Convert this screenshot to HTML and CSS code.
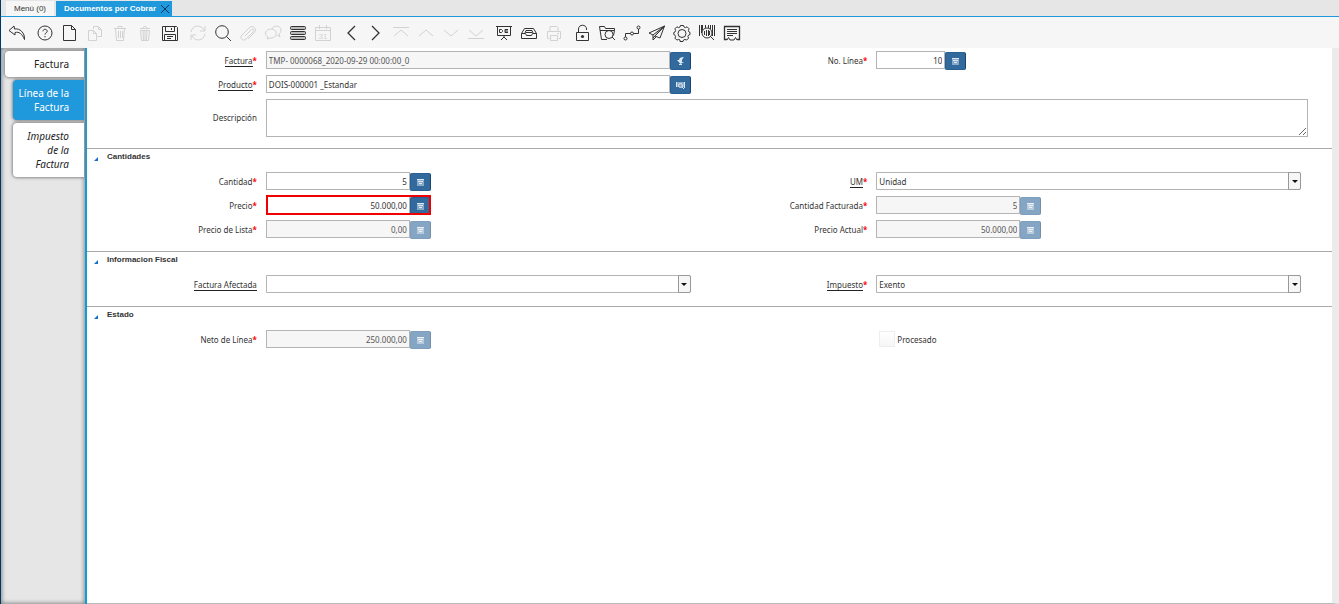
FILE: index.html
```
<!DOCTYPE html>
<html lang="es">
  <head>
    <meta charset="UTF-8" />
    <meta name="viewport" content="width=device-width, initial-scale=1.0" />
    <title>Documentos por Cobrar</title>
    <link rel="stylesheet" href="styles.css">
  </head>
  <body>
    <nav class="window-tabs">
      <button class="window-tab">Menú (0)</button>
      <div class="window-tab active">
        <button class="tab-title">Documentos por Cobrar</button>
        <button class="tab-close" aria-label="Cerrar">
          <svg viewBox="0 0 10 10"><path d="M1 1l8 8M9 1L1 9" /></svg>
        </button>
      </div>
    </nav>

    <div class="toolbar">
      <div class="tool-group">
        <button aria-label="Deshacer"><svg viewBox="0 0 18 18"><path d="M6 2L1 6.500l6 4.500V8.500c4-1 7 1 9.500 7C17 9 12 4 6.500 5z" /></svg></button>
      </div>
      <div class="tool-group">
        <button aria-label="Ayuda"><svg viewBox="0 0 18 18"><circle cx="9" cy="9" r="7" /><path d="M7 7.300c0-2.800 4.200-2.600 4.200 0 0 1.500-2.200 1.500-2.200 3.300M9 12v1.300" /></svg></button>
        <button aria-label="Nuevo"><svg viewBox="0 0 18 18"><path d="M2.500 1.500h8l4 4v11h-12zM10.500 1.500v4h4" /></svg></button>
        <button aria-label="Copiar" disabled><svg viewBox="0 0 18 18"><path d="M7.500 5V2.500h5l3 3v7h-4M12.500 2.500v3h3M2.500 6.500h5l3 3v7h-8zM7.500 6.500v3h3" /></svg></button>
        <button aria-label="Borrar" disabled><svg viewBox="0 0 18 18"><path d="M3 4.500h12M7 4V2.500h4V4M4.500 4.500l1 12h7l1-12M7.500 7v7M9.500 7v7M11.500 7v7" /></svg></button>
        <button aria-label="Borrar selección" disabled><svg viewBox="0 0 18 18"><path d="M4 4.500h10M7 4l1-1.500h2L11 4M4.500 6.500h9l-1 10h-7zM7 7l.5 9M9 7v9M11 7l-.5 9" /></svg></button>
        <button aria-label="Guardar"><svg viewBox="0 0 18 18"><path d="M1.500 2.500h14l1 1v13h-15zM4.500 2.500v5h9v-5M10.500 4v2M3.500 16.500v-6h11v6M6 12.500h6M6 14.500h4" /></svg></button>
      </div>
      <div class="tool-group">
        <button aria-label="Refrescar" disabled><svg viewBox="0 0 18 18"><path d="M2 8c1-7 10-8 13-2M16 2v5h-5M16 10c-1 7-10 8-13 2M2 16v-5h5" /></svg></button>
        <button aria-label="Buscar"><svg viewBox="0 0 18 18"><circle cx="8" cy="8" r="6.300" /><path d="M12.500 12.500L17 17" /></svg></button>
        <button aria-label="Adjunto" disabled><svg viewBox="0 0 18 18"><path d="M6 12l6-6c2-2 4 0 2 2l-7 7c-3 3-7-1-4-4l7-7c4-4 9 1 5 5l-6 6" /></svg></button>
        <button aria-label="Chat" disabled><svg viewBox="0 0 18 18"><path d="M3 15l1-2c-5-3-2-8 3-8 7 0 7 9 0 9H6zM8 5c1-4 9-4 9 1 0 2-1 3-2 4l1 3-3-2" /></svg></button>
        <button aria-label="Vista de tabla"><svg viewBox="0 0 18 18"><g class="bars"><rect x="1.500" y="2.500" width="15" height="3" rx="1" /><rect x="1.500" y="7.500" width="15" height="3" rx="1" /><rect x="1.500" y="12.500" width="15" height="3" rx="1" /></g></svg></button>
        <button aria-label="Historial" disabled><svg viewBox="0 0 18 18"><path d="M1.500 3.500h15v13h-15zM1.500 6.500h15M5.500 1v4M12.500 1v4" /><text x="9" y="14.500">31</text></svg></button>
      </div>
      <div class="tool-group">
        <button aria-label="Registro padre"><svg viewBox="0 0 18 18"><path class="medium" d="M13 2L6 9l7 7" /></svg></button>
        <button aria-label="Registro detalle"><svg viewBox="0 0 18 18"><path class="medium" d="M5 2l7 7-7 7" /></svg></button>
        <button aria-label="Primero" disabled><svg viewBox="0 0 18 18"><path d="M1 3.500h16M2 12l7-6 7 6" /></svg></button>
        <button aria-label="Anterior" disabled><svg viewBox="0 0 18 18"><path d="M2 12l7-6 7 6" /></svg></button>
        <button aria-label="Siguiente" disabled><svg viewBox="0 0 18 18"><path d="M2 6l7 6 7-6" /></svg></button>
        <button aria-label="Último" disabled><svg viewBox="0 0 18 18"><path d="M2 6l7 6 7-6M1 14.500h16" /></svg></button>
      </div>
      <div class="tool-group">
        <button aria-label="Informe"><svg viewBox="0 0 18 18"><path d="M1 2.500h16M2.500 2.500v9h13v-9M9 12v2M6 16l3-3 3 3M4.500 5.500v3h2l1-1v-1l-1-1zM13 5.500h-3v3h3M10 7h3" /></svg></button>
        <button aria-label="Archivo"><svg viewBox="0 0 18 18"><path d="M1.500 9.500l3-5h9l3 5v5h-15zM1.500 9.500h4l1 2h5l1-2h4M5 9l1-2.500h6L13 9M6 8.500h6" /></svg></button>
        <button aria-label="Imprimir" disabled><svg viewBox="0 0 18 18"><path d="M5 7V2.500h7l1 1V7M4.500 14.500h-2v-7h13v7h-2M5.500 11.500h7v5h-7zM12 9.500h2" /></svg></button>
      </div>
      <div class="tool-group">
        <button aria-label="Bloqueo"><svg viewBox="0 0 18 18"><path d="M3.500 8.500h12v8h-12zM5.500 8.500V5c0-5 8-5 8 0v1" /><circle class="solid" cx="9.500" cy="12.500" r="1.600" /></svg></button>
        <button aria-label="Detalle"><svg viewBox="0 0 18 18"><path d="M9 15.500H3.500l-2-13h5l1 2h9v2M2 6.500h14.500l-1 5M14 13l3 3" /><circle cx="11" cy="10.500" r="4" /></svg></button>
        <button aria-label="Flujo de trabajo"><svg viewBox="0 0 18 18"><circle cx="2.500" cy="14.500" r="1.500" /><circle cx="9" cy="9.500" r="1.500" /><circle cx="15.500" cy="3.500" r="1.500" /><path d="M2.500 13V9.500h5M10.500 9.500h5V5" /></svg></button>
        <button aria-label="Solicitudes"><svg viewBox="0 0 18 18"><path d="M16.500 2L1 9l4 2zM16.500 2L7 12l5 2zM5 11v5l3-3M16.500 2L5 14" /></svg></button>
        <button aria-label="Proceso"><svg viewBox="0 0 18 18"><path d="M7.500 1.500h3L11 3l1.500.6 1.600-.8 2 2-.7 1.700L16 8l1 .5v2l-1.500.7-.6 1.300.7 1.600-2 2-1.700-.7-1.400.6-.5 1.500h-3L7 16l-1.400-.6-1.700.7-2-2 .7-1.600L2 11.200.8 10.500v-2L2 8l.6-1.500-.7-1.700 2-2 1.600.8L7 3z" /><circle cx="9" cy="9.500" r="4" /></svg></button>
        <button aria-label="Info producto"><svg viewBox="0 0 18 18"><path d="M1.500 1v11M3.500 1v8M4.500 1v5M7.500 1v3M10.500 1v3M12.500 1v4M14.500 1v11M16.500 1v11M12 12l4 4" /><circle cx="9" cy="9" r="5" /><path d="M6.500 7v4M8.500 6v6M10.500 6v6M11.500 7v4" /></svg></button>
        <button aria-label="Notas"><svg viewBox="0 0 18 18"><path class="medium" d="M4 15.500H1.500v-13h15v13H14" /><path d="M4 5.500h10M4 7.500h10M4 9.500h10M4 11.500h6M4 16l1.500-2.500L7 16h4l1.500-2.500L14 16" /></svg></button>
      </div>
    </div>

    <div class="window">
      <aside class="side-tabs">
        <button class="side-tab parent">Factura</button>
        <button class="side-tab active">Línea de la Factura</button>
        <button class="side-tab child">Impuesto de la Factura</button>
      </aside>

      <form class="form">
        <section class="fields">
          <label for="factura"><u>Factura</u><i>*</i></label>
          <div class="control">
            <input id="factura" type="text" value="TMP- 0000068_2020-09-29 00:00:00_0" readonly />
            <button type="button" class="field-button" aria-label="Ir a factura"><svg viewBox="0 0 9 9"><path class="solid" d="M8 0C5 0 3 1 3 3H1l3.500 4L8 5H6c-.5-2 .5-3 2-5zM3 7h3v1H3z" /></svg></button>
          </div>
          <label for="linea">No. Línea<i>*</i></label>
          <div class="control line-number">
            <input id="linea" class="number" type="text" value="10" />
            <button type="button" class="field-button" aria-label="Calculadora"><svg viewBox="0 0 9 9"><path class="solid faded" d="M1 1h7v7H1z" /><path d="M1 1.500h7M2 3.500h5M3 5.500h3" /></svg></button>
          </div>

          <label for="producto"><u>Producto</u><i>*</i></label>
          <div class="control">
            <input id="producto" type="text" value="DOIS-000001 _Estandar" />
            <button type="button" class="field-button" aria-label="Buscar producto"><svg viewBox="0 0 9 9"><path class="solid faded" d="M0 1h9v5H0z" /><path d="M.5 1v5M8.500 1v6M6 6l2 2" /><circle cx="4.500" cy="4.500" r="2" /></svg></button>
          </div>

          <label class="new-row" for="descripcion">Descripción</label>
          <div class="control wide">
            <textarea id="descripcion"></textarea>
          </div>
        </section>

        <section class="group">
          <h2>Cantidades</h2>
          <div class="fields">
            <label for="cantidad">Cantidad<i>*</i></label>
            <div class="control amount">
              <input id="cantidad" class="number" type="text" value="5" />
              <button type="button" class="field-button" aria-label="Calculadora"><svg viewBox="0 0 9 9"><path class="solid faded" d="M1 1h7v7H1z" /><path d="M1 1.500h7M2 3.500h5M3 5.500h3" /></svg></button>
            </div>
            <label for="um"><u>UM</u><i>*</i></label>
            <div class="control">
              <div class="combo">
                <select id="um"><option>Unidad</option></select>
                <span class="combo-arrow"></span>
              </div>
            </div>

            <label for="precio">Precio<i>*</i></label>
            <div class="control amount highlighted">
              <input id="precio" class="number" type="text" value="50.000,00" />
              <button type="button" class="field-button" aria-label="Calculadora"><svg viewBox="0 0 9 9"><path class="solid faded" d="M1 1h7v7H1z" /><path d="M1 1.500h7M2 3.500h5M3 5.500h3" /></svg></button>
            </div>
            <label for="facturada">Cantidad Facturada<i>*</i></label>
            <div class="control amount">
              <input id="facturada" class="number" type="text" value="5" readonly />
              <button type="button" class="field-button" aria-label="Calculadora" disabled><svg viewBox="0 0 9 9"><path class="solid faded" d="M1 1h7v7H1z" /><path d="M1 1.500h7M2 3.500h5M3 5.500h3" /></svg></button>
            </div>

            <label for="lista">Precio de Lista<i>*</i></label>
            <div class="control amount">
              <input id="lista" class="number" type="text" value="0,00" readonly />
              <button type="button" class="field-button" aria-label="Calculadora" disabled><svg viewBox="0 0 9 9"><path class="solid faded" d="M1 1h7v7H1z" /><path d="M1 1.500h7M2 3.500h5M3 5.500h3" /></svg></button>
            </div>
            <label for="actual">Precio Actual<i>*</i></label>
            <div class="control amount">
              <input id="actual" class="number" type="text" value="50.000,00" readonly />
              <button type="button" class="field-button" aria-label="Calculadora" disabled><svg viewBox="0 0 9 9"><path class="solid faded" d="M1 1h7v7H1z" /><path d="M1 1.500h7M2 3.500h5M3 5.500h3" /></svg></button>
            </div>
          </div>
        </section>

        <section class="group">
          <h2>Informacion Fiscal</h2>
          <div class="fields">
            <label for="afectada"><u>Factura Afectada</u></label>
            <div class="control">
              <div class="combo">
                <select id="afectada"><option></option></select>
                <span class="combo-arrow"></span>
              </div>
            </div>
            <label for="impuesto"><u>Impuesto</u><i>*</i></label>
            <div class="control">
              <div class="combo">
                <select id="impuesto"><option>Exento</option></select>
                <span class="combo-arrow"></span>
              </div>
            </div>
          </div>
        </section>

        <section class="group">
          <h2>Estado</h2>
          <div class="fields">
            <label for="neto">Neto de Línea<i>*</i></label>
            <div class="control amount">
              <input id="neto" class="number" type="text" value="250.000,00" readonly />
              <button type="button" class="field-button" aria-label="Calculadora" disabled><svg viewBox="0 0 9 9"><path class="solid faded" d="M1 1h7v7H1z" /><path d="M1 1.500h7M2 3.500h5M3 5.500h3" /></svg></button>
            </div>
            <div class="control check">
              <input id="procesado" type="checkbox" disabled />
              <label for="procesado">Procesado</label>
            </div>
          </div>
        </section>
      </form>
    </div>
  </body>
</html>
```
FILE: styles.css
```
* {
  margin: 0;
  padding: 0;
  box-sizing: border-box;
}

body {
  min-height: 100vh;
  display: flex;
  flex-direction: column;
  border-left: 1px solid #003764;
  background: #fff;
  color: #333;
  font-family: "Noto Sans", "Open Sans", sans-serif;
  font-size: 8px;
}

button,
input,
select,
textarea {
  font: inherit;
  color: inherit;
}

button {
  border: none;
  background: none;
}

svg {
  fill: none;
  stroke: currentColor;
}

.solid {
  fill: currentColor;
  stroke: none;
}

.faded {
  opacity: 0.5;
}

/* Open windows */
.window-tabs {
  display: flex;
  align-items: flex-end;
  gap: 2px;
  height: 17px;
  padding-left: 5px;
  background: #e6e6e6;
  border-bottom: 1px solid #1f98dc;
  font-family: "Liberation Sans", Arial, sans-serif;
}

.window-tab {
  height: 15px;
  padding: 0 8px;
  background: #f6f6f6;
}

.window-tab.active {
  display: flex;
  align-items: center;
  padding: 0 0 0 8px;
  background: #1f98dc;
  color: #fff;
  font-weight: bold;
}

.tab-close {
  width: 12px;
  height: 10px;
  margin-left: 4px;
  color: #00355f;
}

.tab-close svg {
  display: block;
  width: 10px;
  height: 10px;
}

/* Toolbar */
.toolbar {
  display: flex;
  gap: 3px;
  height: 31px;
  padding-left: 3px;
  background: #f6f6f6;
}

.tool-group {
  display: flex;
}

.tool-group button {
  display: flex;
  align-items: center;
  justify-content: center;
  width: 25px;
  color: #333;
}

.tool-group button:disabled {
  color: #d2d2d2;
}

.tool-group svg {
  width: 18px;
  height: 18px;
}

.tool-group text {
  fill: currentColor;
  stroke: none;
  font-family: "Liberation Sans", Arial, sans-serif;
  font-size: 8px;
  text-anchor: middle;
}

.bars {
  fill: #bbb;
}

.medium {
  stroke-width: 1.3;
}

/* Tabs on the left */
.window {
  flex: 1;
  display: flex;
}

.side-tabs {
  flex: 0 0 86px;
  display: flex;
  flex-direction: column;
  align-items: flex-end;
  gap: 3px;
  padding: 3px 1px 0 0;
  background: #e6e6e6;
  border-right: 2px solid #0d9ddb;
  box-shadow: inset 0 0 4px 1px #888;
}

.side-tab {
  width: 71px;
  padding: 6px 15px 6px 4px;
  border-radius: 4px 0 0 4px;
  background: #fff;
  box-shadow: 0 0 3px 1px #888;
  color: #222;
  font-size: 10px;
  line-height: 14px;
  text-align: right;
}

.side-tab.parent {
  width: 79px;
}

.side-tab.active {
  background: #1f98dc;
  color: #fff;
}

.side-tab.child {
  padding-left: 10px;
  font-style: italic;
}

/* Form */
.form {
  flex: 1;
  border-right: 7px solid #ebebeb;
  border-bottom: 1px solid #bbb;
}

.fields {
  display: grid;
  grid-template-columns: 178fr 433fr 178fr 433fr;
  grid-auto-rows: minmax(24px, auto);
  align-items: center;
  padding: 0 23px 0 1px;
}

.fields > label {
  padding-right: 9px;
  text-align: right;
}

.fields > .new-row {
  grid-column: 1;
}

label u {
  text-decoration: none;
  border-bottom: 1px solid #222;
}

label i {
  color: #f00;
  font-style: normal;
  font-weight: bold;
}

.control {
  display: flex;
  align-items: center;
  margin-right: 8px;
}

.control.wide {
  grid-column: span 3;
  margin-right: 1px;
  padding: 3px 0 1px;
}

.control input[type="text"],
.combo select {
  flex: 1;
  min-width: 0;
  height: 18px;
  padding: 0 2px;
  border: 1px solid #b4b4b4;
  background: #fff;
  outline: none;
}

.control input[readonly] {
  background: #f6f6f6;
  color: #555;
}

.control .number {
  padding-right: 1px;
  text-align: right;
}

.control.line-number {
  width: 90px;
}

.control.amount {
  width: 165px;
}

.control.highlighted {
  outline: 2px solid #f00000;
  outline-offset: -2px;
}

.control textarea {
  width: 100%;
  height: 38px;
  border: 1px solid #b4b4b4;
}

.field-button {
  display: flex;
  align-items: center;
  justify-content: center;
  width: 21px;
  height: 18px;
  margin-top: 2px;
  border: 1px solid #2a5f92;
  border-right-color: #1c456d;
  border-radius: 2px;
  background: #336a9d;
  color: #dde8f2;
}

.field-button:disabled {
  opacity: 0.6;
}

.field-button svg {
  width: 9px;
  height: 9px;
}

.combo {
  flex: 1;
  display: grid;
}

.combo select,
.combo-arrow {
  grid-area: 1 / 1;
}

.combo select {
  appearance: none;
  border-radius: 0 2px 2px 0;
}

.combo-arrow {
  display: flex;
  align-items: center;
  justify-content: center;
  justify-self: end;
  width: 13px;
  border: 1px solid #999;
  border-radius: 0 2px 2px 0;
  background: #f6f6f6;
  pointer-events: none;
}

.combo-arrow::after {
  content: "";
  border: 3px solid transparent;
  border-top-color: #111;
  border-bottom: none;
}

.group {
  margin-top: 10px;
  border-top: 1px solid #aaa;
}

.group h2 {
  display: flex;
  align-items: center;
  gap: 9px;
  height: 14px;
  margin-bottom: 6px;
  padding-left: 7px;
  font-family: "Liberation Sans", Arial, sans-serif;
  font-size: 8px;
}

.group h2::before {
  content: "";
  align-self: flex-end;
  margin-bottom: 2px;
  border-left: 4px solid transparent;
  border-bottom: 4px solid #1570c8;
}

.check {
  grid-column: 4;
  gap: 2px;
  padding-left: 3px;
}

.check input {
  appearance: none;
  width: 16px;
  height: 16px;
  border: 1px solid #eee;
  background: linear-gradient(#fff, #f6f6f6);
}
```
